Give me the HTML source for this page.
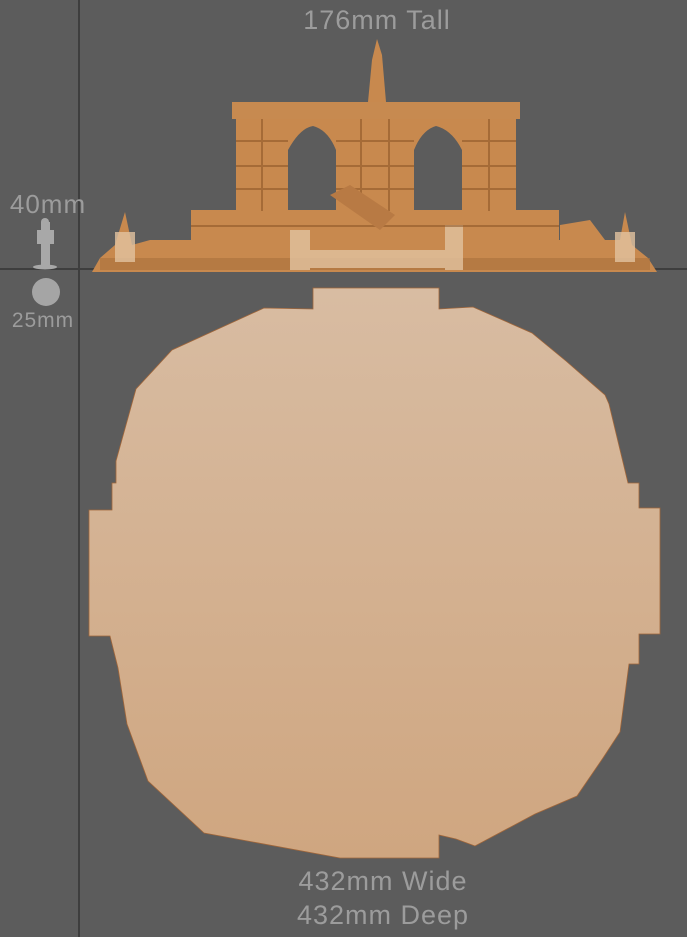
<!DOCTYPE html>
<html><head><meta charset="utf-8"><style>
html,body{margin:0;padding:0;background:#5c5c5c;}
body{width:687px;height:937px;overflow:hidden;position:relative;font-family:"Liberation Sans",sans-serif;}
.t{position:absolute;color:#9c9c9c;font-size:27px;letter-spacing:1px;white-space:nowrap;text-align:center;}
</style></head><body>
<svg width="687" height="937" style="position:absolute;left:0;top:0">
<defs>
<linearGradient id="g" x1="0" y1="0" x2="0" y2="1">
<stop offset="0" stop-color="#d8bca2"/><stop offset="1" stop-color="#cfa680"/>
</linearGradient>
</defs>
<rect x="78" y="0" width="2" height="937" fill="#3e3e3e"/>
<rect x="0" y="268" width="687" height="2" fill="#3e3e3e"/>
<polygon fill="url(#g)" stroke="#a0663a" stroke-width="0.8" points="313,288 439,288 439,309 473,307 532,333 566,361 605,395 609,404 628,483 639,483 639,508 660,508 660,634 639,634 639,664 629,664 620,732 603,758 577,796 535,814 475,846 456,839 439,835 439,858 340,858 204,833 148,781 127,724 118,668 110,636 89,636 89,510 112,510 112,483 116,483 116,461 136,389 172,350 264,308 313,309"/>
<g fill="#c8894e">
<polygon points="372,60 377,39 382,55 386,102 368,102"/>
<rect x="232" y="102" width="288" height="17" fill="#c78a50"/>
<path d="M236,119 H516 V211 H236 Z M288,211 V150 Q300,128 313,126 Q328,130 336,150 V211 Z M414,211 V150 Q422,130 436,126 Q452,130 462,150 V211 Z" fill-rule="evenodd"/>
<rect x="191" y="210" width="368" height="32"/>
<polygon points="560,225 590,220 605,240 560,242"/>
<polygon points="92,272 100,258 115,245 125,212 132,245 150,240 620,240 625,212 632,245 648,258 657,272"/>
</g>
<g fill="#a8703c" opacity="0.6"><rect x="100" y="258" width="550" height="12"/></g>
<g fill="#e2c3a0" opacity="0.8">
<rect x="290" y="230" width="20" height="40"/><rect x="445" y="225" width="18" height="45"/>
<rect x="115" y="232" width="20" height="30"/><rect x="615" y="232" width="20" height="30"/>
<rect x="310" y="250" width="135" height="18"/>
</g>
<g fill="#8a5426" opacity="0.55">
<rect x="236" y="140" width="52" height="2"/><rect x="236" y="165" width="52" height="2"/><rect x="236" y="188" width="52" height="2"/>
<rect x="462" y="140" width="54" height="2"/><rect x="462" y="165" width="54" height="2"/><rect x="462" y="188" width="54" height="2"/>
<rect x="336" y="140" width="78" height="2"/><rect x="336" y="165" width="78" height="2"/><rect x="336" y="188" width="78" height="2"/>
<rect x="261" y="119" width="2" height="92"/><rect x="488" y="119" width="2" height="92"/><rect x="360" y="119" width="2" height="92"/><rect x="388" y="119" width="2" height="92"/>
<rect x="191" y="225" width="368" height="2"/>
</g>
<polygon points="330,195 350,185 395,215 380,230" fill="#b87a44"/>
<g fill="#a8a8a8">
<ellipse cx="45" cy="267" rx="12" ry="2.5"/>
<rect x="41" y="222" width="9" height="44"/>
<circle cx="45" cy="222" r="4"/>
<rect x="37" y="230" width="17" height="14"/>
</g>
<circle cx="46" cy="292" r="14" fill="#a5a5a5"/>
</svg>
<div class="t" style="left:287px;top:5px;width:180px">176mm Tall</div>
<div class="t" style="left:0px;top:189px;width:96px;font-size:26px">40mm</div>
<div class="t" style="left:0px;top:309px;width:86px;font-size:21px">25mm</div>
<div class="t" style="left:283px;top:866px;width:200px">432mm Wide</div>
<div class="t" style="left:283px;top:900px;width:200px">432mm Deep</div>
</body></html>
